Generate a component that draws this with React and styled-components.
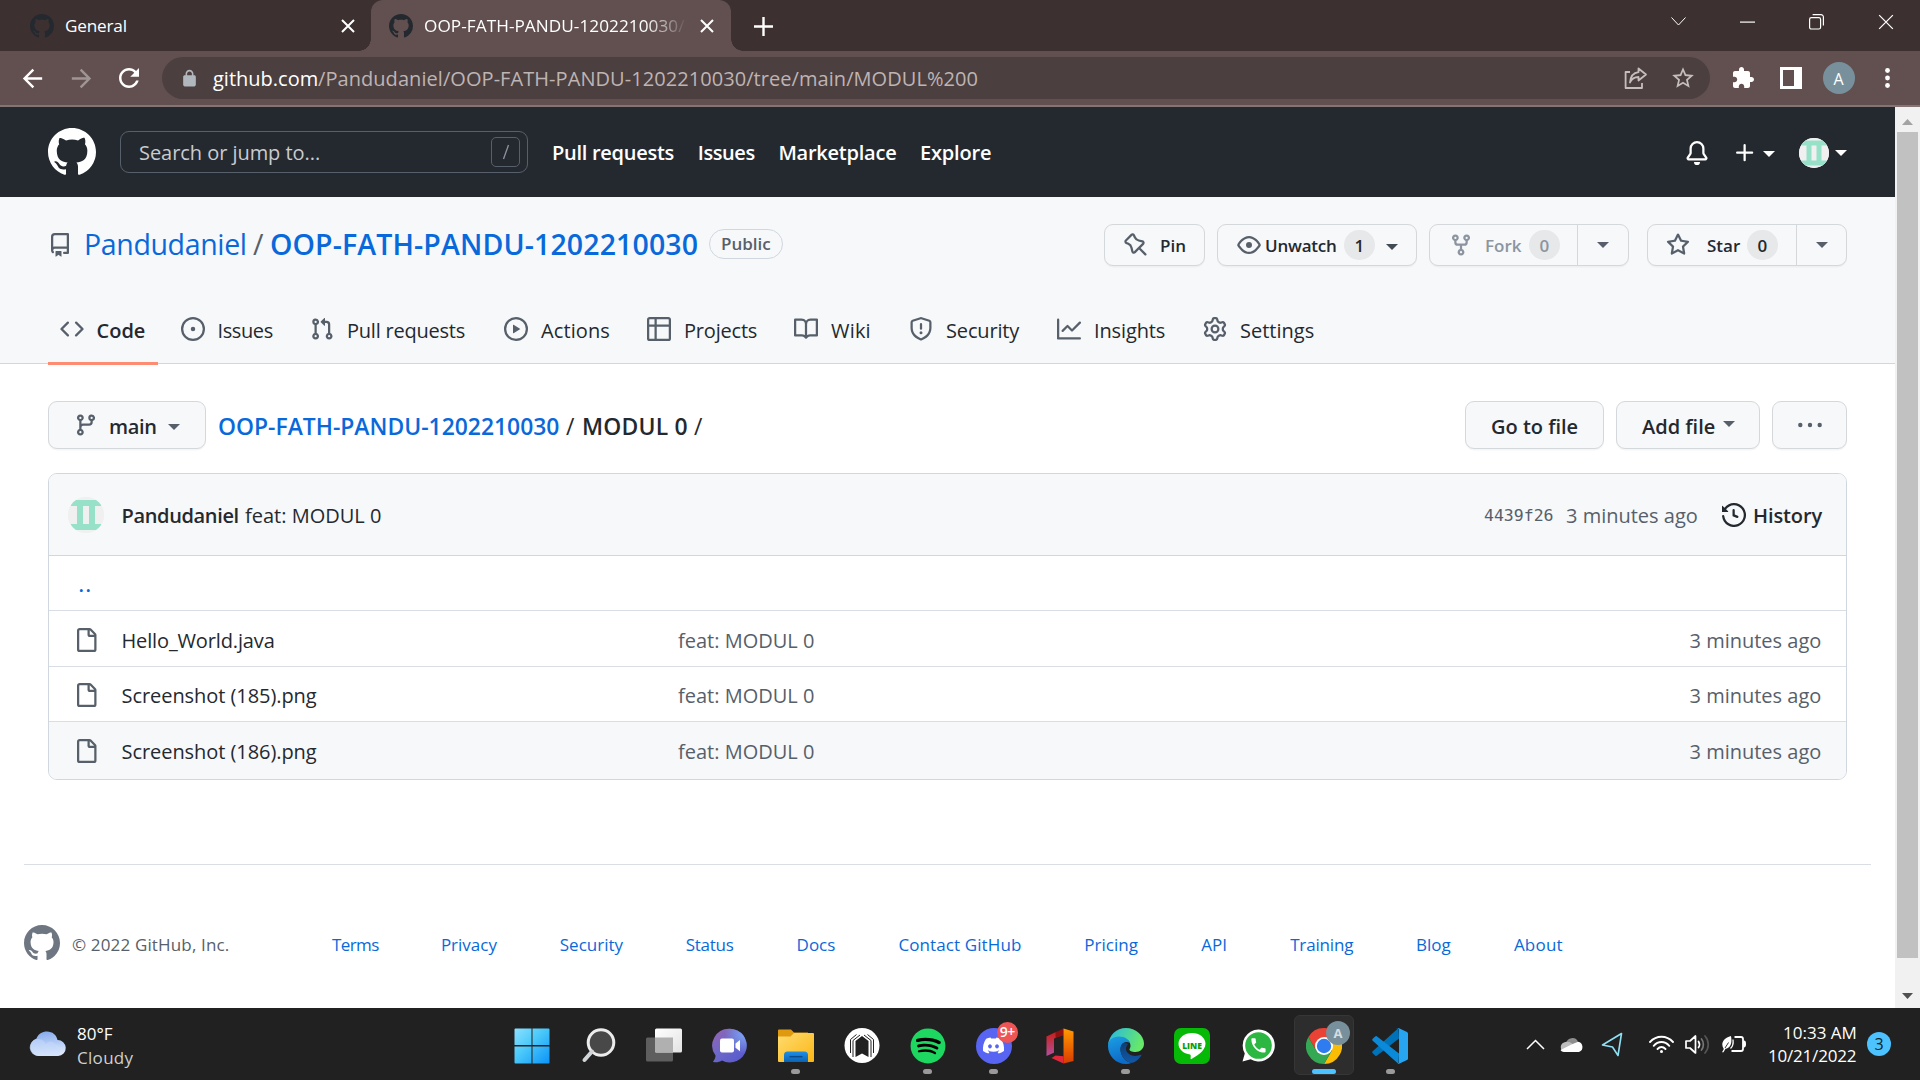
import React from "react";
import styled, { createGlobalStyle, css } from "styled-components";
import { FaDiscord, FaSpotify } from "react-icons/fa";

const GlobalStyle = createGlobalStyle`
  *, *::before, *::after { box-sizing: border-box; }
  body { margin: 0; overflow: hidden; background: #fff; font-family: "Open Sans", "Noto Sans", sans-serif; }
`;

const T = styled.span`
  display: inline-block;
  flex: none;
  width: ${(p) => (p.$w ? p.$w + "px" : "auto")};
  padding-top: ${(p) => (p.$pt === undefined ? 2 : p.$pt)}px;
  font-size: ${(p) => p.$size || 20}px;
  font-weight: ${(p) => p.$weight || 400};
  letter-spacing: ${(p) => p.$ls || 0}px;
  color: ${(p) => p.$color || "inherit"};
  margin-left: ${(p) => p.$ml || 0}px;
  line-height: ${(p) => p.$lh || 28}px;
  white-space: nowrap;
`;
const Mono = styled(T)`font-family: "DejaVu Sans Mono", monospace;`;

const Svg = ({ d, size = 24, vb = 16, fill = "currentColor", children }) => (
  <svg width={size} height={size} viewBox={`0 0 ${vb} ${vb}`} fill={fill}>
    {d && <path fillRule="evenodd" d={d} />}
    {children}
  </svg>
);

const P = {
  github: "M8 0C3.58 0 0 3.58 0 8c0 3.54 2.29 6.53 5.47 7.59.4.07.55-.17.55-.38 0-.19-.01-.82-.01-1.49-2.01.37-2.53-.49-2.69-.94-.09-.23-.48-.94-.82-1.13-.28-.15-.68-.52-.01-.53.63-.01 1.08.58 1.23.82.72 1.21 1.87.87 2.33.66.07-.52.28-.87.51-1.07-1.78-.2-3.64-.89-3.64-3.95 0-.87.31-1.59.82-2.15-.08-.2-.36-1.02.08-2.12 0 0 .67-.21 2.2.82.64-.18 1.32-.27 2-.27.68 0 1.36.09 2 .27 1.53-1.04 2.2-.82 2.2-.82.44 1.1.16 1.92.08 2.12.51.56.82 1.27.82 2.15 0 3.07-1.87 3.75-3.65 3.95.29.25.54.73.54 1.48 0 1.07-.01 1.93-.01 2.2 0 .21.15.46.55.38A8.013 8.013 0 0016 8c0-4.42-3.58-8-8-8z",
  bell: "M8 16a2 2 0 001.985-1.75c.017-.137-.097-.25-.235-.25h-3.5c-.138 0-.252.113-.235.25A2 2 0 008 16zM3 5a5 5 0 0110 0v2.947c0 .05.015.098.042.139l1.703 2.555A1.518 1.518 0 0113.482 13H2.518a1.518 1.518 0 01-1.263-2.36l1.703-2.554A.25.25 0 003 7.947V5zm5-3.5A3.5 3.5 0 004.5 5v2.947c0 .346-.102.683-.294.97l-1.703 2.556a.018.018 0 00-.003.01l.001.006c0 .002.002.004.004.006a.017.017 0 00.006.004l.007.001h10.964l.007-.001a.016.016 0 00.006-.004.016.016 0 00.004-.006l.001-.007a.017.017 0 00-.003-.01l-1.703-2.554a1.75 1.75 0 01-.294-.97V5A3.5 3.5 0 008 1.5z",
  plus: "M7.75 2a.75.75 0 01.75.75V7h4.25a.75.75 0 110 1.5H8.5v4.25a.75.75 0 11-1.5 0V8.5H2.75a.75.75 0 010-1.5H7V2.75A.75.75 0 017.75 2z",
  repo: "M2 2.5A2.5 2.5 0 014.5 0h8.75a.75.75 0 01.75.75v12.5a.75.75 0 01-.75.75h-2.5a.75.75 0 110-1.5h1.75v-2h-8a1 1 0 00-.714 1.7.75.75 0 01-1.072 1.05A2.495 2.495 0 012 11.5v-9zm10.5-1V9h-8c-.356 0-.694.074-1 .208V2.5a1 1 0 011-1h8zM5 12.25v3.25a.25.25 0 00.4.2l1.45-1.087a.25.25 0 01.3 0L8.6 15.7a.25.25 0 00.4-.2v-3.25a.25.25 0 00-.25-.25h-3.5a.25.25 0 00-.25.25z",
  code: "M4.72 3.22a.75.75 0 011.06 1.06L2.06 8l3.72 3.72a.75.75 0 11-1.06 1.06L.47 8.53a.75.75 0 010-1.06l4.25-4.25zm6.56 0a.75.75 0 10-1.06 1.06L13.94 8l-3.72 3.72a.75.75 0 101.06 1.06l4.25-4.25a.75.75 0 000-1.06l-4.25-4.25z",
  issue: "M8 9.5a1.5 1.5 0 100-3 1.5 1.5 0 000 3zM8 0a8 8 0 100 16A8 8 0 008 0zM1.5 8a6.5 6.5 0 1113 0 6.5 6.5 0 01-13 0z",
  pr: "M7.177 3.073L9.573.677A.25.25 0 0110 .854v4.792a.25.25 0 01-.427.177L7.177 3.427a.25.25 0 010-.354zM3.75 2.5a.75.75 0 100 1.5.75.75 0 000-1.5zm-2.25.75a2.25 2.25 0 113 2.122v5.256a2.251 2.251 0 11-1.5 0V5.372A2.25 2.25 0 011.5 3.25zM11 2.5h-1V4h1a1 1 0 011 1v5.628a2.251 2.251 0 101.5 0V5A2.5 2.5 0 0011 2.5zm1 10.25a.75.75 0 111.5 0 .75.75 0 01-1.5 0zM3.75 12a.75.75 0 100 1.5.75.75 0 000-1.5z",
  play: "M1.5 8a6.5 6.5 0 1113 0 6.5 6.5 0 01-13 0zM8 0a8 8 0 100 16A8 8 0 008 0zM6.379 5.227A.25.25 0 006 5.442v5.117a.25.25 0 00.379.214l4.264-2.559a.25.25 0 000-.428L6.379 5.227z",
  table: "M0 1.75C0 .784.784 0 1.75 0h12.5C15.216 0 16 .784 16 1.75v12.5A1.75 1.75 0 0114.25 16H1.75A1.75 1.75 0 010 14.25V1.75zM1.5 6.5v7.75c0 .138.112.25.25.25H5v-8H1.5zM5 5H1.5V1.75a.25.25 0 01.25-.25H5V5zm1.5 1.5v8h7.75a.25.25 0 00.25-.25V6.5h-8zm8-1.5h-8V1.5h7.75a.25.25 0 01.25.25V5z",
  book: "M0 1.75A.75.75 0 01.75 1h4.253c1.227 0 2.317.59 3 1.501A3.744 3.744 0 0111.006 1h4.245a.75.75 0 01.75.75v10.5a.75.75 0 01-.75.75h-4.507a2.25 2.25 0 00-1.591.659l-.622.621a.75.75 0 01-1.06 0l-.622-.621A2.25 2.25 0 005.258 13H.75a.75.75 0 01-.75-.75V1.75zm8.755 3a2.25 2.25 0 012.25-2.25H14.5v9h-3.757c-.71 0-1.4.201-1.992.572l.004-7.322zm-1.504 7.324l.004-5.073-.002-2.253A2.25 2.25 0 005.003 2.5H1.5v9h3.757a3.75 3.75 0 011.994.574z",
  shield: "M7.467.133a1.75 1.75 0 011.066 0l5.25 1.68A1.75 1.75 0 0115 3.48V7c0 1.566-.32 3.182-1.303 4.682-.983 1.498-2.585 2.813-5.032 3.855a1.7 1.7 0 01-1.33 0c-2.447-1.042-4.049-2.357-5.032-3.855C1.32 10.182 1 8.566 1 7V3.48a1.75 1.75 0 011.217-1.667l5.25-1.68zm.61 1.429a.25.25 0 00-.153 0l-5.25 1.68a.25.25 0 00-.174.238V7c0 1.358.275 2.666 1.057 3.86.784 1.194 2.121 2.34 4.366 3.297a.2.2 0 00.154 0c2.245-.956 3.582-2.104 4.366-3.298C13.225 9.666 13.5 8.36 13.5 7V3.48a.25.25 0 00-.174-.237l-5.25-1.68zM9 10.5a1 1 0 11-2 0 1 1 0 012 0zm-.25-5.75a.75.75 0 10-1.5 0v3a.75.75 0 001.5 0v-3z",
  graph: "M1.5 1.75a.75.75 0 00-1.5 0v12.5c0 .414.336.75.75.75h14.5a.75.75 0 000-1.5H1.5V1.75zm14.28 2.53a.75.75 0 00-1.06-1.06L10 7.94 7.53 5.47a.75.75 0 00-1.06 0L3.22 8.72a.75.75 0 001.06 1.06L7 7.06l2.47 2.47a.75.75 0 001.06 0l5.25-5.25z",
  gear: "M7.429 1.525a6.593 6.593 0 011.142 0c.036.003.108.036.137.146l.289 1.105c.147.56.55.967.997 1.189.174.086.341.183.501.29.417.278.97.423 1.53.27l1.102-.303c.11-.03.175.016.195.046.219.31.41.641.573.989.014.031.022.11-.059.19l-.815.806c-.411.406-.562.957-.53 1.456a4.588 4.588 0 010 .582c-.032.499.119 1.05.53 1.456l.815.806c.08.08.073.159.059.19a6.494 6.494 0 01-.573.99c-.02.029-.086.074-.195.045l-1.103-.303c-.559-.153-1.112-.008-1.529.27-.16.107-.327.204-.5.29-.449.222-.851.628-.998 1.189l-.289 1.105c-.029.11-.101.143-.137.146a6.613 6.613 0 01-1.142 0c-.036-.003-.108-.037-.137-.146l-.289-1.105c-.147-.56-.55-.967-.997-1.189a4.502 4.502 0 01-.501-.29c-.417-.278-.97-.423-1.53-.27l-1.102.303c-.11.03-.175-.016-.195-.046a6.492 6.492 0 01-.573-.989c-.014-.031-.022-.11.059-.19l.815-.806c.411-.406.562-.957.53-1.456a4.587 4.587 0 010-.582c.032-.499-.119-1.05-.53-1.456l-.815-.806c-.08-.08-.073-.159-.059-.19a6.44 6.44 0 01.573-.99c.02-.029.086-.075.195-.045l1.103.303c.559.153 1.112.008 1.529-.27.16-.107.327-.204.5-.29.449-.222.851-.628.998-1.189l.289-1.105c.029-.11.101-.143.137-.146zM8 0c-.236 0-.47.01-.701.03-.743.065-1.29.615-1.458 1.261l-.29 1.106c-.017.066-.078.158-.211.224a5.994 5.994 0 00-.668.386c-.123.082-.233.09-.3.071L3.27 2.776c-.644-.177-1.392.02-1.82.63a7.977 7.977 0 00-.704 1.217c-.315.675-.111 1.422.363 1.891l.815.806c.05.048.098.147.088.294a6.084 6.084 0 000 .772c.01.147-.038.246-.088.294l-.815.806c-.474.469-.678 1.216-.363 1.891.2.428.436.835.704 1.218.428.609 1.176.806 1.82.63l1.103-.303c.066-.019.176-.011.299.071.213.143.436.272.668.386.133.066.194.158.212.224l.289 1.106c.169.646.715 1.196 1.458 1.26a8.094 8.094 0 001.402 0c.743-.064 1.29-.614 1.458-1.26l.29-1.106c.017-.066.078-.158.211-.224a5.98 5.98 0 00.668-.386c.123-.082.233-.09.3-.071l1.102.302c.644.177 1.392-.02 1.82-.63.268-.382.505-.789.704-1.217.315-.675.111-1.422-.364-1.891l-.814-.806c-.05-.048-.098-.147-.088-.294a6.1 6.1 0 000-.772c-.01-.147.039-.246.088-.294l.814-.806c.475-.469.679-1.216.364-1.891a7.992 7.992 0 00-.704-1.218c-.428-.609-1.176-.806-1.82-.63l-1.103.303c-.066.019-.176.011-.299-.071a5.991 5.991 0 00-.668-.386c-.133-.066-.194-.158-.212-.224L10.16 1.29C9.99.645 9.444.095 8.701.031A8.094 8.094 0 008 0zm1.5 8a1.5 1.5 0 11-3 0 1.5 1.5 0 013 0zM11 8a3 3 0 11-6 0 3 3 0 016 0z",
  branch: "M11.75 2.5a.75.75 0 100 1.5.75.75 0 000-1.5zm-2.25.75a2.25 2.25 0 113 2.122V6A2.5 2.5 0 0110 8.5H6a1 1 0 00-1 1v1.128a2.251 2.251 0 11-1.5 0V5.372a2.25 2.25 0 111.5 0v1.836A2.492 2.492 0 016 7h4a1 1 0 001-1v-.628A2.25 2.25 0 019.5 3.25zM4.25 12a.75.75 0 100 1.5.75.75 0 000-1.5zM3.5 3.25a.75.75 0 111.5 0 .75.75 0 01-1.5 0z",
  fork: "M5 3.25a.75.75 0 11-1.5 0 .75.75 0 011.5 0zm0 2.122a2.25 2.25 0 10-1.5 0v.878A2.25 2.25 0 005.75 8.5h1.5v2.128a2.251 2.251 0 101.5 0V8.5h1.5a2.25 2.25 0 002.25-2.25v-.878a2.25 2.25 0 10-1.5 0v.878a.75.75 0 01-.75.75h-4.5A.75.75 0 015 6.25v-.878zm3.75 7.378a.75.75 0 11-1.5 0 .75.75 0 011.5 0zm3-8.75a.75.75 0 100-1.5.75.75 0 000 1.5z",
  star: "M8 .25a.75.75 0 01.673.418l1.882 3.815 4.21.612a.75.75 0 01.416 1.279l-3.046 2.97.719 4.192a.75.75 0 01-1.088.791L8 12.347l-3.766 1.98a.75.75 0 01-1.088-.79l.72-4.194L.818 6.374a.75.75 0 01.416-1.28l4.21-.611L7.327.668A.75.75 0 018 .25zm0 2.445L6.615 5.5a.75.75 0 01-.564.41l-3.097.45 2.24 2.184a.75.75 0 01.216.664l-.528 3.084 2.769-1.456a.75.75 0 01.698 0l2.77 1.456-.53-3.084a.75.75 0 01.216-.664l2.24-2.183-3.096-.45a.75.75 0 01-.564-.41L8 2.694v.001z",
  eye: "M1.679 7.932c.412-.621 1.242-1.75 2.366-2.717C5.175 4.242 6.527 3.5 8 3.5c1.473 0 2.824.742 3.955 1.715 1.124.967 1.954 2.096 2.366 2.717a.119.119 0 010 .136c-.412.621-1.242 1.75-2.366 2.717C10.825 11.758 9.473 12.5 8 12.5c-1.473 0-2.824-.742-3.955-1.715C2.92 9.818 2.09 8.69 1.679 8.068a.119.119 0 010-.136zM8 2c-1.981 0-3.67.992-4.933 2.078C1.797 5.169.88 6.423.43 7.1a1.619 1.619 0 000 1.798c.45.678 1.367 1.932 2.637 3.024C4.329 13.008 6.019 14 8 14c1.981 0 3.67-.992 4.933-2.078 1.27-1.091 2.187-2.345 2.637-3.023a1.619 1.619 0 000-1.798c-.45-.678-1.367-1.932-2.637-3.023C11.671 2.992 9.981 2 8 2zm0 8a2 2 0 100-4 2 2 0 000 4z",
  pin: "M4.456.734a1.75 1.75 0 012.826.504l.613 1.327a3.081 3.081 0 002.084 1.707l2.454.584c1.332.317 1.8 1.972.832 2.94L11.06 10l3.72 3.72a.75.75 0 11-1.061 1.06L10 11.06l-2.204 2.205c-.968.968-2.623.5-2.94-.832l-.584-2.454a3.081 3.081 0 00-1.707-2.084l-1.327-.613a1.75 1.75 0 01-.504-2.826L4.456.734zM5.92 1.866a.25.25 0 00-.404-.072L1.794 5.516a.25.25 0 00.072.404l1.328.613A4.582 4.582 0 015.73 9.63l.584 2.454a.25.25 0 00.42.12l5.47-5.47a.25.25 0 00-.12-.42L9.63 5.73a4.581 4.581 0 01-3.098-2.537L5.92 1.866z",
  history: "M1.643 3.143L.427 1.927A.25.25 0 000 2.104V5.75c0 .138.112.25.25.25h3.646a.25.25 0 00.177-.427L2.715 4.215a6.5 6.5 0 11-1.18 4.458.75.75 0 10-1.493.154 8.001 8.001 0 101.6-5.684zM7.75 4a.75.75 0 01.75.75v2.992l2.028.812a.75.75 0 01-.557 1.392l-2.5-1A.75.75 0 017 8.25v-3.5A.75.75 0 017.75 4z",
  file: "M2 1.75C2 .784 2.784 0 3.75 0h6.586c.464 0 .909.184 1.237.513l2.914 2.914c.329.328.513.773.513 1.237v9.586A1.75 1.75 0 0113.25 16h-9.5A1.75 1.75 0 012 14.25V1.75zm1.75-.25a.25.25 0 00-.25.25v12.5c0 .138.112.25.25.25h9.5a.25.25 0 00.25-.25V6h-2.75A1.75 1.75 0 019 4.25V1.5H3.75zm6.75.062V4.25c0 .138.112.25.25.25h2.688a.252.252 0 00-.011-.013l-2.914-2.914a.272.272 0 00-.013-.011z",
  back: "M20 11H7.83l5.59-5.59L12 4l-8 8 8 8 1.41-1.41L7.83 13H20v-2z",
  fwd: "M4 13h12.17l-5.59 5.59L12 20l8-8-8-8-1.41 1.41L16.17 11H4v2z",
  reload: "M17.65 6.35C16.2 4.9 14.21 4 12 4c-4.42 0-7.99 3.58-7.99 8s3.57 8 7.99 8c3.73 0 6.84-2.55 7.73-6h-2.08c-.82 2.33-3.04 4-5.65 4-3.31 0-6-2.69-6-6s2.69-6 6-6c1.66 0 3.14.69 4.22 1.78L13 11h7V4l-2.35 2.35z",
  lock: "M18 8h-1V6c0-2.76-2.24-5-5-5S7 3.24 7 6v2H6c-1.1 0-2 .9-2 2v10c0 1.1.9 2 2 2h12c1.1 0 2-.9 2-2V10c0-1.1-.9-2-2-2zM9 6c0-1.66 1.34-3 3-3s3 1.34 3 3v2H9V6z",
  mstar: "M22 9.24l-7.19-.62L12 2 9.19 8.63 2 9.24l5.46 4.73L5.82 21 12 17.27 18.18 21l-1.63-7.03L22 9.24zM12 15.4l-3.76 2.27 1-4.28-3.32-2.88 4.38-.38L12 6.1l1.71 4.04 4.38.38-3.32 2.88 1 4.28L12 15.4z",
  puzzle: "M20.5 11H19V7c0-1.1-.9-2-2-2h-4V3.5C13 2.12 11.88 1 10.5 1S8 2.12 8 3.5V5H4c-1.1 0-1.99.9-1.99 2v3.8H3.5c1.49 0 2.7 1.21 2.7 2.7s-1.21 2.7-2.7 2.7H2V20c0 1.1.9 2 2 2h3.8v-1.5c0-1.49 1.21-2.7 2.7-2.7 1.49 0 2.7 1.21 2.7 2.7V22H17c1.1 0 2-.9 2-2v-4h1.5c1.38 0 2.5-1.12 2.5-2.5S21.88 11 20.5 11z",
  phone: "M6.62 10.79c1.44 2.83 3.76 5.14 6.59 6.59l2.2-2.2c.27-.27.67-.36 1.02-.24 1.12.37 2.33.57 3.57.57.55 0 1 .45 1 1V20c0 .55-.45 1-1 1-9.39 0-17-7.61-17-17 0-.55.45-1 1-1h3.5c.55 0 1 .45 1 1 0 1.25.2 2.45.57 3.57.11.35.03.74-.25 1.02l-2.2 2.2z",
};

const Screen = styled.div`
  width: 1920px; height: 1080px; display: flex; flex-direction: column; overflow: hidden;
  svg { display: block; flex: none; }
`;

/* ---------- browser frame ---------- */
const TabStrip = styled.div`
  height: 51px; flex: none; display: flex; background: #3c3030; color: #fff;
`;
const Tab = styled.div`
  width: ${(p) => p.$w}px; height: 51px; display: flex; align-items: center; position: relative;
  padding-left: ${(p) => p.$pl}px;
  ${(p) => p.$active && css`
    background: #625050; border-radius: 12px 12px 0 0;
    &::before, &::after {
      content: ""; position: absolute; bottom: 0; width: 12px; height: 12px;
    }
    &::before { left: -12px; background: radial-gradient(circle at 0 0, transparent 11.5px, #625050 12px); }
    &::after { right: -12px; background: radial-gradient(circle at 100% 0, transparent 11.5px, #625050 12px); }
  `}
`;
const Favicon = styled.div`color: #24292f; width: 24px; height: 24px; margin-top: 1px;`;
const TabTitle = styled.div`
  width: ${(p) => p.$w}px; margin-left: 11px; overflow: hidden; display: flex;
  ${(p) => p.$fade && css`mask-image: linear-gradient(90deg, #000 84%, transparent 100%);`}
`;
const TabClose = styled.div`margin-left: ${(p) => p.$ml}px; display: flex;`;
const NewTab = styled.div`margin: 17px 0 0 23px;`;
const WindowButtons = styled.div`
  margin-left: auto; display: flex; height: 43px;
`;
const WinSlot = styled.div`width: 69px; display: flex; align-items: center; justify-content: center;`;

const Toolbar = styled.div`
  height: 56px; flex: none; display: flex; align-items: center; padding: 0 9px; background: #625050;
  border-bottom: 2px solid #857474; color: #fff;
`;
const Slot = styled.div`
  width: 48px; height: 48px; display: flex; align-items: center; justify-content: center; flex: none;
  color: ${(p) => p.$color || "inherit"}; padding-left: ${(p) => p.$pl || 0}px; padding-right: ${(p) => p.$pr || 0}px;
`;
const Omnibox = styled.div`
  width: 1548px; height: 42px; margin: 0 9px; border-radius: 21px; background: #4c3f3f;
  display: flex; align-items: center; padding: 0 3px; flex: none;
`;
const Url = styled.div`flex: 1; display: flex; color: #beb4b4;`;
const ProfileDot = styled.div`
  width: 32px; height: 32px; border-radius: 50%; background: #78909c; color: #fff;
  display: flex; align-items: center; justify-content: center;
`;

/* ---------- page ---------- */
const Viewport = styled.div`height: 901px; flex: none; display: flex;`;
const Page = styled.div`width: 1895px; background: #fff; display: flex; flex-direction: column; color: #24292f;`;
const Scrollbar = styled.div`
  width: 25px; background: #f1f1f1; display: flex; flex-direction: column; align-items: center;
`;
const ScrollArrow = styled.div`
  height: 25px; width: 25px; display: flex; align-items: center; justify-content: center; padding-top: ${(p) => p.$pt || 0}px;
`;
const Thumb = styled.div`width: 21px; height: 826px; background: #c1c1c1; margin-bottom: 25px;`;

const Header = styled.header`
  height: 90px; background: #24292f; color: #fff; display: flex; align-items: center; padding: 0 48px; flex: none;
`;
const Search = styled.div`
  width: 408px; height: 42px; margin: 0 24px; border: 1px solid #57606a; border-radius: 9px;
  display: flex; align-items: center; justify-content: space-between; padding: 0 7px 0 18px; color: #c9ccd0;
`;
const SlashKey = styled.div`
  width: 29px; height: 30px; border: 1.5px solid #57606a; border-radius: 5px; display: flex; align-items: center; justify-content: center;
`;
const HeaderNav = styled.nav`display: flex; gap: 23.7px; padding-bottom: 1px;`;
const HeaderActions = styled.div`margin-left: auto; display: flex; align-items: center; padding-top: 2px;`;
const IconGap = styled.div`margin-left: ${(p) => p.$ml}px; display: flex;`;
const Caret = styled.span`
  display: block; flex: none; width: 0; height: 0; border: 6px solid transparent; border-bottom: 0;
  border-top: 6.5px solid ${(p) => p.$color || "currentColor"};
  margin: ${(p) => p.$m || 0};
`;
const Avatar = styled.div`
  width: ${(p) => p.$s}px; height: ${(p) => p.$s}px; margin-left: ${(p) => p.$ml || 0}px;
  border-radius: 50%; overflow: hidden; flex: none; background: #f0f0f0;
`;

const RepoHead = styled.div`
  height: 167px; background: #f6f8fa; border-bottom: 1.5px solid #d0d7de; padding: 0 48px; flex: none;
  display: flex; flex-direction: column; justify-content: space-between;
`;
const TitleRow = styled.div`display: flex; align-items: center; height: 96px; color: #57606a;`;
const RepoName = styled.div`display: flex; padding-bottom: 2px;`;
const Badge = styled.div`
  width: 74px; height: 30px; border: 1.5px solid #d0d7de; border-radius: 15px; margin: -2px 0 0 11px;
  display: flex; align-items: center; justify-content: center;
`;
const Actions = styled.div`margin-left: auto; display: flex; color: #24292f;`;
const btn = css`
  display: flex; align-items: center; background: #f6f8fa; border: 1.5px solid #d5d8da; border-radius: 9px;
  box-shadow: 0 1.5px 0 rgba(27, 31, 36, 0.04);
`;
const Button = styled.div`
  ${btn}
  width: ${(p) => p.$w}px; height: ${(p) => p.$h || 42}px; padding-left: ${(p) => p.$pl || 0}px;
  margin-left: ${(p) => p.$ml || 0}px; color: ${(p) => p.$color || "#24292f"}; flex: none;
  svg { color: ${(p) => p.$icon || "#57606a"}; }
`;
const SplitEnd = styled.div`
  width: ${(p) => p.$w}px; height: 100%; margin-left: auto; border-left: 1.5px solid #d5d8da; display: flex; align-items: center; justify-content: center;
`;
const Counter = styled.span`
  height: 30px; width: 31px; border-radius: 15px; background: #e6e8ea; display: flex; align-items: center; justify-content: center;
  margin-left: ${(p) => p.$ml}px;
`;
const Tabs = styled.nav`display: flex; gap: 12px; height: 69px; margin-bottom: -2px;`;
const TabItem = styled.a`
  width: ${(p) => p.$w}px; height: 69px; display: flex; align-items: center; flex: none;
  gap: 12px; border-bottom: 3px solid ${(p) => (p.$on ? "#fd8c73" : "transparent")};
  padding: 1px 12px 0;
  svg { color: #57606a; margin: 0 0 2px ${(p) => (p.$on ? 0 : -1)}px; }
`;

const Main = styled.main`padding: 37px 48px 0; flex: 1;`;
const PathRow = styled.div`display: flex; align-items: center; height: 48px;`;
const FileBox = styled.div`
  margin-top: 24px; border: 1.5px solid #d0d7de; border-radius: 9px; overflow: hidden; height: 307px;
`;
const CommitRow = styled.div`
  height: 81px; background: #f6f8fa; display: flex; align-items: center; padding: 0 25px 0 19px;
`;
const FileRow = styled.div`
  height: ${(p) => p.$h}px; border-top: 1.5px solid ${(p) => (p.$first ? "#d0d7de" : "#d8dee4")}; display: flex; align-items: center;
  padding: 3px 24.5px ${(p) => p.$pb || 0}px; background: ${(p) => (p.$hover ? "#f6f8fa" : "#fff")};
`;
const Push = styled.div`margin-left: auto; display: flex; align-items: center; color: ${(p) => p.$color || "inherit"};`;
const History = styled.div`margin-left: 24px; display: flex; align-items: center; color: #24292f;`;

const Footer = styled.footer`
  margin: 0 24px; border-top: 1.5px solid #d8dee4; height: 144px; flex: none; display: flex; align-items: flex-start; padding-top: 60px; color: #57606a;
`;
const FooterText = styled.div`display: flex; padding-top: 4px;`;
const FooterLinks = styled.div`display: flex; gap: 62.9px; margin-left: 103px; color: #0969da;`;

/* ---------- taskbar ---------- */
const Taskbar = styled.div`
  height: 72px; flex: none; background: #212121; display: flex; color: #fff; align-items: center;
`;
const Weather = styled.div`display: flex; width: 498.5px; padding-left: 29px; align-items: center;`;
const Stack = styled.div`
  display: flex; flex-direction: column; align-items: ${(p) => p.$align || "flex-start"};
  margin-left: ${(p) => p.$ml || 0}px; padding-top: ${(p) => p.$top || 0}px;
`;
const AppSlot = styled.div`
  width: 66.05px; height: 72px; display: flex; align-items: center; justify-content: center; position: relative; flex: none;
  padding-top: 3px;
  &::after {
    content: ""; position: absolute; bottom: 6px; height: 5px; border-radius: 3px; left: calc(50% - ${(p) => (p.$active ? 12 : 4.5)}px);
    width: ${(p) => (p.$active ? 24 : p.$run ? 9 : 0)}px; background: ${(p) => (p.$active ? "#4cc2ff" : "#9a9a9a")};
  }
`;
const ActivePlate = styled.div`
  position: absolute; inset: 7px 3px 5px; background: #2d2d2d; border: 1px solid #363636; border-radius: 6px;
`;
const AppIcon = styled.div`position: relative; display: flex; align-items: center; justify-content: center; width: 36px; height: 36px;`;
const AppBadge = styled.div`
  position: absolute; right: ${(p) => p.$r}px; top: ${(p) => p.$t}px; width: ${(p) => p.$s}px; height: ${(p) => p.$s}px;
  border-radius: 50%; background: ${(p) => p.$bg}; display: flex; align-items: center; justify-content: center;
`;
const Disc = styled.div`
  width: 36px; height: 36px; border-radius: 50%; background: ${(p) => p.$bg}; display: flex; align-items: center; justify-content: center;
`;
const SpotifyDisc = styled.div`
  width: 34px; height: 34px; border-radius: 50%; background: #000; display: flex; align-items: center; justify-content: center;
`;
const LineTile = styled.div`
  width: 36px; height: 36px; border-radius: 7px; background: #06b906; display: grid; place-items: center;
  > * { grid-area: 1 / 1; }
`;
const Tray = styled.div`margin-left: auto; display: flex; align-items: center; height: 72px; padding-right: 29px;`;
const TrayIcon = styled.div`margin-left: ${(p) => p.$ml || 0}px; display: flex; flex: none;`;
const Notice = styled.div`
  width: 24px; height: 24px; border-radius: 50%; background: #4cc2ff; margin-left: 11px; display: flex; align-items: center; justify-content: center; color: #10222c;
`;

const Cross = ({ s = 14, w = 2 }) => (
  <svg width={s} height={s} viewBox="0 0 14 14" stroke="#fff" strokeWidth={w} fill="none"><path d="M1 1l12 12M13 1L1 13" /></svg>
);
const Identicon = ({ s, ml }) => (
  <Avatar $s={s} $ml={ml}>
    <svg width={s} height={s} viewBox="0 0 36 36">
      <rect width="36" height="36" fill="#f0f0f0" />
      <path fill="#97e1c9" d="M3 3h30v6H3zM9 9h6v18H9zM21 9h6v18h-6zM3 27h30v6H3z" />
    </svg>
  </Avatar>
);

const I36 = ({ children }) => <svg width="36" height="36" viewBox="0 0 36 36">{children}</svg>;
const Grad = ({ id, a, b, x2 = 1, y2 = 1 }) => (
  <linearGradient id={id} x1="0" y1="0" x2={x2} y2={y2}><stop offset="0" stopColor={a} /><stop offset="1" stopColor={b} /></linearGradient>
);

const StartIcon = () => (
  <I36>
    <defs>
      <linearGradient id="win" gradientUnits="userSpaceOnUse" x1="1" y1="1" x2="35" y2="35"><stop offset="0" stopColor="#8ae0ff" /><stop offset=".45" stopColor="#48c8fa" /><stop offset="1" stopColor="#0e94f8" /></linearGradient>
    </defs>
    <path fill="url(#win)" d="M1.500 .5h16v16.500H.5V1.500a1 1 0 011-1zM18.500 .5h16a1 1 0 011 1V17h-17zM.5 18.500h17v17h-16a1 1 0 01-1-1zM18.500 18.500h17v16a1 1 0 01-1 1h-16z" />
  </I36>
);
const SearchIcon = () => (
  <I36>
    <circle cx="21" cy="14.500" r="12.800" fill="#484848" stroke="#ececec" strokeWidth="3" />
    <path d="M12 23.500L4.500 32" stroke="#d2d5d8" strokeWidth="4" strokeLinecap="round" />
  </I36>
);
const TaskViewIcon = () => (
  <I36>
    <defs><Grad id="tv" a="#ffffff" b="#e2e2e2" /></defs>
    <rect x="0" y="9.500" width="27" height="24" rx="1.500" fill="#5e5e5e" />
    <rect x="9" y=".5" width="27" height="24" rx="1.500" fill="url(#tv)" />
    <path d="M9 9.500h18v15H10.500A1.500 1.500 0 019 23z" fill="#b0b0b0" />
  </I36>
);
const ChatIcon = () => (
  <I36>
    <defs><linearGradient id="chat" x1="0" y1="0" x2="1" y2="1"><stop offset="0" stopColor="#9a62ae" /><stop offset=".45" stopColor="#6c68c8" /><stop offset="1" stopColor="#5558cf" /></linearGradient>
      <radialGradient id="chat2" cx=".95" cy=".15" r=".6"><stop offset="0" stopColor="#7ea6f5" /><stop offset="1" stopColor="#7ea6f5" stopOpacity="0" /></radialGradient></defs>
    {["url(#chat)", "url(#chat2)"].map((f) => (
      <path key={f} fill={f} d="M18 .8a16.800 16.800 0 11-8 31.600c-2.200 1.400-5.500 2.400-8.500 1.600C1 34 1 33.500 1.500 33c1.500-2 2-3.500 2-5.500A16.800 16.800 0 0118 .8z" />
    ))}
    <rect x="8" y="10.500" width="14" height="14" rx="2" fill="#fff" /><path fill="#fff" d="M23.500 15.500l4.500-3.500v11.200l-4.500-3.500z" />
  </I36>
);
const ExplorerIcon = () => (
  <I36>
    <defs><Grad id="fold" a="#ffdc70" b="#fbb615" /><Grad id="fb" a="#1e90e8" b="#0b63b4" x2={0} /></defs>
    <path fill="#e09a10" d="M0 2.500A1 1 0 011 1.500h12l3 3H30V9H0z" />
    <path fill="url(#fold)" d="M0 8.500h12.500L16 5h19a1 1 0 011 1v27a1 1 0 01-1 1H1a1 1 0 01-1-1z" />
    <path fill="url(#fb)" d="M6 34v-7a3.500 3.500 0 013.500-3.500h17A3.500 3.500 0 0130 27v7z" /><path d="M11.500 28.700h13" stroke="#0a4a8c" strokeWidth="1.500" />
  </I36>
);
const ArchIcon = () => (
  <I36>
    <circle cx="18" cy="17.500" r="17.500" fill="#fff" />
    <path fill="#212121" d="M11.500 13L18 8l6.500 5v16L18 25.500 11.500 29z" />
    <path d="M6.500 25V11.500l6-5M29.500 25V11.500l-6-5M9 29V12.500l7-5.500M27 29V12.500L20 7" fill="none" stroke="#212121" strokeWidth="1" />
  </I36>
);
const OfficeIcon = () => (
  <I36>
    <defs><Grad id="of1" a="#ff9a00" b="#d83b01" x2={0} /><Grad id="of2" a="#c8201a" b="#b2509c" x2={0} /></defs>
    <path fill="#8f1010" d="M4.500 8.500L21.500 .5v7L11.500 11v12z" />
    <path fill="url(#of2)" d="M4.500 8.500l9-4.300V24L4.500 28z" />
    <path fill="#212121" d="M12 10.500l9.500-2.500v20l-9.500-1z" />
    <path fill="#e3283c" d="M9.500 30l4-2.500 8 .8V35.500z" />
    <path fill="url(#of1)" d="M21.500 .5l10 3v29.500l-10 2.500z" />
  </I36>
);
const EdgeIcon = () => (
  <I36>
    <defs>
      <Grad id="e1" a="#25b7e8" b="#66e86a" y2={0.3} /><Grad id="e2" a="#1b9fe4" b="#0d6bc8" y2={1} x2={0.3} /><Grad id="e3" a="#0b3f78" b="#1258a8" x2={0} />
    </defs>
    <path fill="url(#e1)" d="M0 17C1 7 8.500 0 18 0s18 7.500 18 15.500c0 5.500-4 8.500-8.500 8.500-3.500 0-6.500-1.200-6-2.800.8-1.800 1.600-3 .5-6C20 9 5 7 0 17z" />
    <path fill="url(#e2)" d="M0 18C0 12 5 8.500 11 8.500c6.500 0 10.500 3.500 11 6.500-5-2.500-9.500.5-9.500 6.500C12.500 28 18 34.500 24 34.800 22 35.600 20 36 18 36 8 36 0 28 0 18z" />
    <path fill="url(#e3)" d="M14.500 15.500C11.500 19 12 26 16 30.500c3.500 4 8 5 10.500 3.600 3.500-2 5.500-4.300 7-6.800.2-.5-.2-.8-.7-.5-6 2.700-13.800.2-14.800-5-.3-2.200.6-4 2-5.500-1.200-1.800-3.700-2-5.500-.8z" />
  </I36>
);
const LineBubble = () => (
  <svg width="28" height="28" viewBox="0 0 28 28" fill="#fff"><path d="M14 1C6.500 1 .5 5.700.5 11.800c0 5.200 4.500 9.600 10.600 10.500 2 .3 1.700 1.200 1.500 4.200 0 .6.400.8.900.5C17 25 27.500 19.500 27.500 11.800 27.500 5.700 21.500 1 14 1z" /></svg>
);
const WhatsAppIcon = () => (
  <I36>
    <path fill="#fff" d="M18.500 1.500A16 16 0 1110.700 31.300L2.500 33.500l2.300-8A16 16 0 0118.500 1.500z" />
    <circle cx="18.500" cy="17.500" r="13.300" fill="#2bb741" />
    <g transform="translate(9 8) scale(.79)"><path fill="#fff" d={P.phone} /></g>
  </I36>
);
const ChromeIcon = () => (
  <I36>
    <path fill="#fbbc05" d="M18 18V9h15.590A18 18 0 0118 36l7.790-13.500z" />
    <path fill="#34a853" d="M18 18l7.790 4.500L18 36A18 18 0 012.410 9L10.200 22.500z" />
    <path fill="#ea4335" d="M2.410 9L10.200 22.500 18 9h15.590A18 18 0 002.410 9z" />
    <circle cx="18" cy="18" r="9" fill="#fff" /><circle cx="18" cy="18" r="7.200" fill="#2f7bf0" />
  </I36>
);
const CodeIcon = () => (
  <I36>
    <path fill="#0072b8" d="M26.500 0L.7 23.300a1.300 1.300 0 000 1.900l2.400 2.200a1.500 1.500 0 002 .1L27 10.500z" />
    <path fill="#0a8ad8" d="M26.500 36L.7 12.700a1.300 1.300 0 010-1.900l2.400-2.200a1.500 1.500 0 012-.1L27 25.500z" />
    <path fill="#27a5f0" d="M26.500 0L35 4a1.800 1.800 0 011 1.600v24.800a1.800 1.800 0 01-1 1.600l-8.500 4c-1 .4-2 .2-2.700-.5 1.200 1.200 3.200.3 3.200-1.400V2c0-1.700-2-2.600-3.200-1.400C24.500-.1 25.500-.4 26.500 0z" />
  </I36>
);
const CloudIcon = () => (
  <svg width="37" height="26" viewBox="0 0 37 26">
    <defs><Grad id="cl" a="#7fa6ec" b="#dbe8fb" x2={0.2} /><Grad id="cl2" a="#b9d0f8" b="#d4e3fb" x2={0} /></defs>
    <path fill="url(#cl)" d="M10 25a9 9 0 01-2.500-17.500C9 3 13.500.5 18 .5c5.500 0 9.500 3.500 10.500 8.500A8 8 0 0129 25z" />
    <path fill="url(#cl2)" opacity=".8" d="M9 25a8.500 8.500 0 118-12c3-3.500 7-3 9 0A7 7 0 0129 25z" />
  </svg>
);

const navTabs = [
  ["code", "Code", 110, 49, 600, 0], ["issue", "Issues", 117, 55, 400, -0.4], ["pr", "Pull requests", 182, 118, 400, -0.23],
  ["play", "Actions", 131, 69, 400, 0.1], ["table", "Projects", 135, 73, 400, -0.2], ["book", "Wiki", 103, 40, 400, 0.2],
  ["shield", "Security", 136, 73, 400, -0.15], ["graph", "Insights", 134, 71, 400, -0.13], ["gear", "Settings", 136, 74, 400, 0],
];
const files = [
  ["Hello_World.java", 153, -0.14, 56, 0], ["Screenshot (185).png", 195, -0.06, 55, 1], ["Screenshot (186).png", 195, -0.06, 59, 4],
];
const footerLinks = [
  ["Terms", 46, -0.6], ["Privacy", 56, 0], ["Security", 63, 0], ["Status", 48, -0.25], ["Docs", 39, 0], ["Contact GitHub", 123, 0.1],
  ["Pricing", 54, 0], ["API", 26, 0], ["Training", 63, -0.15], ["Blog", 35, 0], ["About", 49, 0.2],
];
const apps = [
  { el: <StartIcon /> }, { el: <SearchIcon /> }, { el: <TaskViewIcon /> }, { el: <ChatIcon /> },
  { el: <ExplorerIcon />, run: true }, { el: <ArchIcon /> },
  { el: <SpotifyDisc><FaSpotify size={36} color="#1ed760" /></SpotifyDisc>, run: true },
  {
    el: <><Disc $bg="#5865f2"><FaDiscord size={23} color="#fff" /></Disc>
      <AppBadge $r={-6} $t={-6} $s={21} $bg="#f05555"><T $size={14} $lh={20} $pt={0} $weight={600} $ls={-0.5}>9+</T></AppBadge></>,
    run: true,
  },
  { el: <OfficeIcon /> }, { el: <EdgeIcon />, run: true },
  { el: <LineTile><LineBubble /><T $size={8.5} $lh={12} $pt={0} $weight={800} $color="#06a006">LINE</T></LineTile> },
  { el: <WhatsAppIcon /> },
  {
    el: <><ChromeIcon /><AppBadge $r={-8} $t={-7} $s={24} $bg="#78909c"><T $size={13} $lh={20} $pt={0} $weight={700} $color="#d5dde1">A</T></AppBadge></>,
    active: true,
  },
  { el: <CodeIcon />, run: true },
];

export default function App() {
  return (
    <Screen>
      <GlobalStyle />
      <TabStrip>
        <Tab $w={371} $pl={30}>
          <Favicon><Svg d={P.github} /></Favicon>
          <TabTitle $w={262}><T $size={17.2} $w={62} $ls={-0.2} $pt={0}>General</T></TabTitle>
          <TabClose $ml={14}><Cross /></TabClose>
        </Tab>
        <Tab $w={360} $pl={18} $active>
          <Favicon><Svg d={P.github} /></Favicon>
          <TabTitle $w={263} $fade><T $size={17.2} $w={260} $pt={0} $ls={0.05}>OOP-FATH-PANDU-1202210030/</T></TabTitle>
          <TabClose $ml={13}><Cross /></TabClose>
        </Tab>
        <NewTab>
          <svg width="19" height="19" viewBox="0 0 19 19" stroke="#fff" strokeWidth="2.4"><path d="M9.500 0v19M0 9.500h19" /></svg>
        </NewTab>
        <WindowButtons>
          <WinSlot><svg width="15" height="9" viewBox="0 0 15 9" fill="none" stroke="#fff"><path d="M.5.5l7 7.500 7-7.500" /></svg></WinSlot>
          <WinSlot><svg width="15" height="2" viewBox="0 0 15 2"><path d="M0 .5h15v1.200H0z" fill="#fff" /></svg></WinSlot>
          <WinSlot>
            <svg width="15" height="16" viewBox="0 0 15 16" fill="none" stroke="#fff" strokeWidth="1.2">
              <rect x=".6" y="3.600" width="11" height="11.400" rx="1.800" /><path d="M3.600.6H12a2.400 2.400 0 012.400 2.400v8.600" />
            </svg>
          </WinSlot>
          <WinSlot><Cross s={16} w={1.1} /></WinSlot>
        </WindowButtons>
      </TabStrip>

      <Toolbar>
        <Slot $pr={1}><Svg d={P.back} vb={24} size={29} /></Slot>
        <Slot $color="#a09494"><Svg d={P.fwd} vb={24} size={29} /></Slot>
        <Slot><Svg d={P.reload} vb={24} size={30} /></Slot>
        <Omnibox>
          <Slot $color="#b0b8bd"><Svg d={P.lock} vb={24} size={19} /></Slot>
          <Url>
            <T $w={105} $color="#fff">github.com</T>
            <T $w={660} $ls={0.06}>/Pandudaniel/OOP-FATH-PANDU-1202210030/tree/main/MODUL%200</T>
          </Url>
          <Slot $color="#c6bebe" $pl={2}>
            <svg width="24" height="24" viewBox="0 0 24 24" fill="none" stroke="currentColor" strokeWidth="1.8" strokeLinejoin="round">
              <path d="M6 6H1.600v16H18v-5" /><path d="M14.500 2.500l7.500 6-7.500 6V11C10 11 7.500 13 6 16.500 6.500 10.500 9.500 6.800 14.500 6.200z" />
            </svg>
          </Slot>
          <Slot $color="#c6bebe"><Svg d={P.mstar} vb={24} size={26} /></Slot>
        </Omnibox>
        <Slot><Svg d={P.puzzle} vb={24} size={24} /></Slot>
        <Slot><svg width="22" height="22" viewBox="0 0 22 22"><path fill="#fff" fillRule="evenodd" d="M0 0h22v22H0zM3 3v16h11V3z" /></svg></Slot>
        <Slot><ProfileDot><T $size={16} $w={11} $pt={1}>A</T></ProfileDot></Slot>
        <Slot><svg width="5" height="20" viewBox="0 0 5 20" fill="#fff"><circle cx="2.500" cy="2.500" r="2.400" /><circle cx="2.500" cy="10" r="2.400" /><circle cx="2.500" cy="17.500" r="2.400" /></svg></Slot>
      </Toolbar>

      <Viewport>
        <Page>
          <Header>
            <Svg d={P.github} size={48} />
            <Search><T $w={181} $ls={-0.05}>Search or jump to...</T><SlashKey><svg width="8" height="16" viewBox="0 0 8 16" stroke="#8c959f" strokeWidth="1.3"><path d="M1.500 15L6.500 1" /></svg></SlashKey></Search>
            <HeaderNav>
              <T $weight={600} $w={122} $ls={-0.27}>Pull requests</T><T $weight={600} $w={57} $ls={-0.4}>Issues</T>
              <T $weight={600} $w={118} $ls={-0.23}>Marketplace</T><T $weight={600} $w={71} $ls={-0.2}>Explore</T>
            </HeaderNav>
            <HeaderActions>
              <Svg d={P.bell} /><IconGap $ml={24}><Svg d={P.plus} /></IconGap><Caret $m="2px 0 0 6px" />
              <Identicon s={30} ml={24} /><Caret $m="0 0 0 6px" />
            </HeaderActions>
          </Header>

          <RepoHead>
            <TitleRow>
              <Svg d={P.repo} />
              <RepoName>
                <T $size={28.5} $w={162} $ml={12} $lh={38} $pt={0} $ls={-0.35} $color="#0969da">Pandudaniel</T>
                <T $size={28.5} $w={11} $ml={7} $lh={38} $pt={0}>/</T>
                <T $size={28.5} $w={428} $ml={6} $lh={38} $pt={0} $ls={0.12} $weight={600} $color="#0969da">OOP-FATH-PANDU-1202210030</T>
              </RepoName>
              <Badge><T $size={17} $w={50} $weight={600} $pt={0}>Public</T></Badge>
              <Actions>
                <Button $w={101} $pl={19}><Svg d={P.pin} /><T $size={17} $w={26} $ml={12} $weight={600}>Pin</T></Button>
                <Button $w={200} $ml={12} $pl={19}>
                  <Svg d={P.eye} /><T $size={17} $w={71} $ml={4} $weight={600} $ls={-0.2}>Unwatch</T>
                  <Counter $ml={8}><T $size={17} $w={10} $weight={600}>1</T></Counter><Caret $m="4px 0 0 11px" $color="#424a53" />
                </Button>
                <Button $w={200} $ml={12} $pl={19} $color="#8c959f" $icon="#8c959f">
                  <Svg d={P.fork} /><T $size={17} $w={36} $ml={12} $weight={600}>Fork</T>
                  <Counter $ml={8}><T $size={17} $w={10} $weight={600}>0</T></Counter>
                  <SplitEnd $w={51}><Caret $color="#57606a" /></SplitEnd>
                </Button>
                <Button $w={200} $ml={18} $pl={18}>
                  <Svg d={P.star} /><T $size={17} $w={32} $ml={17} $weight={600}>Star</T>
                  <Counter $ml={8}><T $size={17} $w={10} $weight={600}>0</T></Counter>
                  <SplitEnd $w={50}><Caret $color="#57606a" /></SplitEnd>
                </Button>
              </Actions>
            </TitleRow>
            <Tabs>
              {navTabs.map(([ic, label, w, tw, wt, ls], i) => (
                <TabItem key={label} $w={w} $on={i === 0}><Svg d={P[ic]} /><T $w={tw} $weight={wt} $ls={ls} $ml={i > 1 ? 1 : 0.5}>{label}</T></TabItem>
              ))}
            </Tabs>
          </RepoHead>

          <Main>
            <PathRow>
              <Button $w={158} $h={48} $pl={25}><Svg d={P.branch} /><T $w={47} $ml={11} $pt={3} $weight={600} $ls={-0.3}>main</T><Caret $m="4px 0 0 12px" $color="#57606a" /></Button>
              <T $size={22.9} $w={342} $ml={12} $pt={3} $weight={600} $color="#0969da">OOP-FATH-PANDU-1202210030</T>
              <T $size={22.9} $w={9} $ml={6} $pt={3}>/</T><T $size={22.9} $w={106} $ml={7} $pt={3} $weight={600} $ls={0.2}>MODUL 0</T><T $size={22.9} $w={9} $ml={6} $pt={3}>/</T>
              <Push>
                <Button $w={139} $h={48} $pl={25}><T $w={88} $weight={600} $pt={3}>Go to file</T></Button>
                <Button $w={144} $h={48} $ml={12} $pl={25}><T $w={75} $weight={600} $pt={3}>Add file</T><Caret $m="0 0 3px 6px" $color="#57606a" /></Button>
                <Button $w={75} $h={48} $ml={12} $pl={25}>
                  <svg width="24" height="6" viewBox="0 0 24 6" fill="#57606a"><circle cx="2.300" cy="3" r="2.200" /><circle cx="12" cy="3" r="2.200" /><circle cx="21.700" cy="3" r="2.200" /></svg>
                </Button>
              </Push>
            </PathRow>
            <FileBox>
              <CommitRow>
                <Identicon s={36} />
                <T $w={117} $ml={17.5} $weight={600} $ls={-0.35}>Pandudaniel</T><T $w={137} $ml={6.5}>feat: MODUL 0</T>
                <Push $color="#57606a">
                  <Mono $size={16.5} $w={69}>4439f26</Mono>
                  <T $w={132} $ml={13}>3 minutes ago</T>
                  <History><Svg d={P.history} /><T $w={68} $ml={7} $weight={600} $ls={-0.1}>History</T></History>
                </Push>
              </CommitRow>
              <FileRow $first $h={55}><T $w={15} $ml={5} $pt={0} $weight={600} $ls={1.5} $color="#0969da">..</T></FileRow>
              {files.map(([n, w, ls, h, pb], i) => (
                <FileRow key={n} $h={h} $pb={pb} $hover={i === 2}>
                  <Svg d={P.file} fill="#57606a" />
                  <T $w={w} $ls={ls} $ml={24}>{n}</T>
                  <T $w={137} $ml={556.5 - w} $color="#57606a">feat: MODUL 0</T>
                  <Push $color="#57606a"><T $w={132}>3 minutes ago</T></Push>
                </FileRow>
              ))}
            </FileBox>
          </Main>

          <Footer>
            <Svg d={P.github} size={36} fill="#6e7781" />
            <FooterText>
              <T $size={17} $w={157} $ml={12} $ls={0.15}>© 2022 GitHub, Inc.</T>
              <FooterLinks>{footerLinks.map(([t, w, ls]) => <T key={t} $size={17} $w={w} $ls={ls}>{t}</T>)}</FooterLinks>
            </FooterText>
          </Footer>
        </Page>
        <Scrollbar>
          <ScrollArrow $pt={4}><svg width="11" height="6"><path d="M0 6L5.500 0 11 6z" fill="#a3a3a3" /></svg></ScrollArrow>
          <Thumb />
          <ScrollArrow><svg width="11" height="6"><path d="M0 0h11L5.500 6z" fill="#505050" /></svg></ScrollArrow>
        </Scrollbar>
      </Viewport>

      <Taskbar>
        <Weather>
          <CloudIcon />
          <Stack $ml={11} $top={3}><T $size={17} $w={36} $lh={24} $pt={0}>80°F</T><T $size={17} $w={57} $lh={24} $pt={0} $ls={0.3} $color="#cfcfcf">Cloudy</T></Stack>
        </Weather>
        {apps.map((a, i) => (
          <AppSlot key={i} $run={a.run} $active={a.active}>
            {a.active && <ActivePlate />}
            <AppIcon>{a.el}</AppIcon>
          </AppSlot>
        ))}
        <Tray>
          <TrayIcon><svg width="19" height="11" viewBox="0 0 19 11" fill="none" stroke="#fff" strokeWidth="1.5"><path d="M1 10l8.500-8.500L18 10" /></svg></TrayIcon>
          <TrayIcon $ml={14}>
            <svg width="25" height="17" viewBox="0 0 25 17">
              <path fill="#8f8f8f" d="M7 7a6.500 6.500 0 0112-1.500L13 11z" /><path fill="#bdbdbd" d="M5.500 16A5 5 0 015 6.500c3-1.500 6-.5 8.500 1.500L18 11z" />
              <path fill="#fff" d="M1.500 14l11-5.500 6.500-2.700A5.300 5.300 0 0120 16H5.500c-2 0-3.300-.8-4-2z" />
            </svg>
          </TrayIcon>
          <TrayIcon $ml={17}><svg width="22" height="25" viewBox="0 0 22 25" fill="none" stroke="#8fe0f5" strokeWidth="1.6" strokeLinejoin="round"><path d="M20.500 1.500L17 23.500l-5.500-8.500L1.500 13z" /></svg></TrayIcon>
          <TrayIcon $ml={26}>
            <svg width="25" height="19" viewBox="0 0 25 19" fill="none" stroke="#fff" strokeWidth="1.9" strokeLinecap="round">
              <path d="M1 7c6.500-7 16.500-7 23 0" /><path d="M4.700 10.800c4.500-5 11-5 15.600 0" /><path d="M8.500 14c2.500-2.600 5.500-2.600 8 0" /><circle cx="12.500" cy="16.500" r="1.500" fill="#fff" stroke="none" />
            </svg>
          </TrayIcon>
          <TrayIcon $ml={11}>
            <svg width="25" height="21" viewBox="0 0 25 21" fill="none" stroke="#fff" strokeWidth="1.7" strokeLinejoin="round" strokeLinecap="round">
              <path d="M1 7h4l5.500-5v17L5 14H1z" /><path d="M13.500 7.500c1.200 1.800 1.200 4.200 0 6" /><path d="M16.500 5c2.500 3 2.500 8 0 11" stroke="#777" /><path d="M20 2c4.300 5 4.300 12 0 17" stroke="#555" />
            </svg>
          </TrayIcon>
          <TrayIcon $ml={11}>
            <svg width="26" height="18" viewBox="0 0 26 18" fill="none" stroke="#fff" strokeWidth="1.8">
              <path d="M13.500 2H20a2 2 0 012 2v10a2 2 0 01-2 2h-9.500" /><path d="M23 6.500c1.500 0 1.500 5 0 5z" fill="#fff" />
              <path d="M2 16.500L7.500 8" stroke="#212121" strokeWidth="1" />
              <path d="M1 17.200l1.800-3.200C-.5 9 1.500 3.500 10 1c1.200 6.500 0 12-5.500 12.800L2.500 17.200z" fill="#fff" stroke="none" />
              <path d="M4 13l3.500-5.500" stroke="#212121" strokeWidth=".9" /><path d="M12 4.500c.5 4-.2 7-2.500 9" strokeWidth="1.300" />
            </svg>
          </TrayIcon>
          <Stack $ml={21} $align="flex-end"><T $size={17} $w={73} $lh={23} $pt={0}>10:33 AM</T><T $size={17} $w={88} $lh={23} $pt={0} $ls={-0.2}>10/21/2022</T></Stack>
          <Notice><T $size={16} $w={9} $pt={0}>3</T></Notice>
        </Tray>
      </Taskbar>
    </Screen>
  );
}
